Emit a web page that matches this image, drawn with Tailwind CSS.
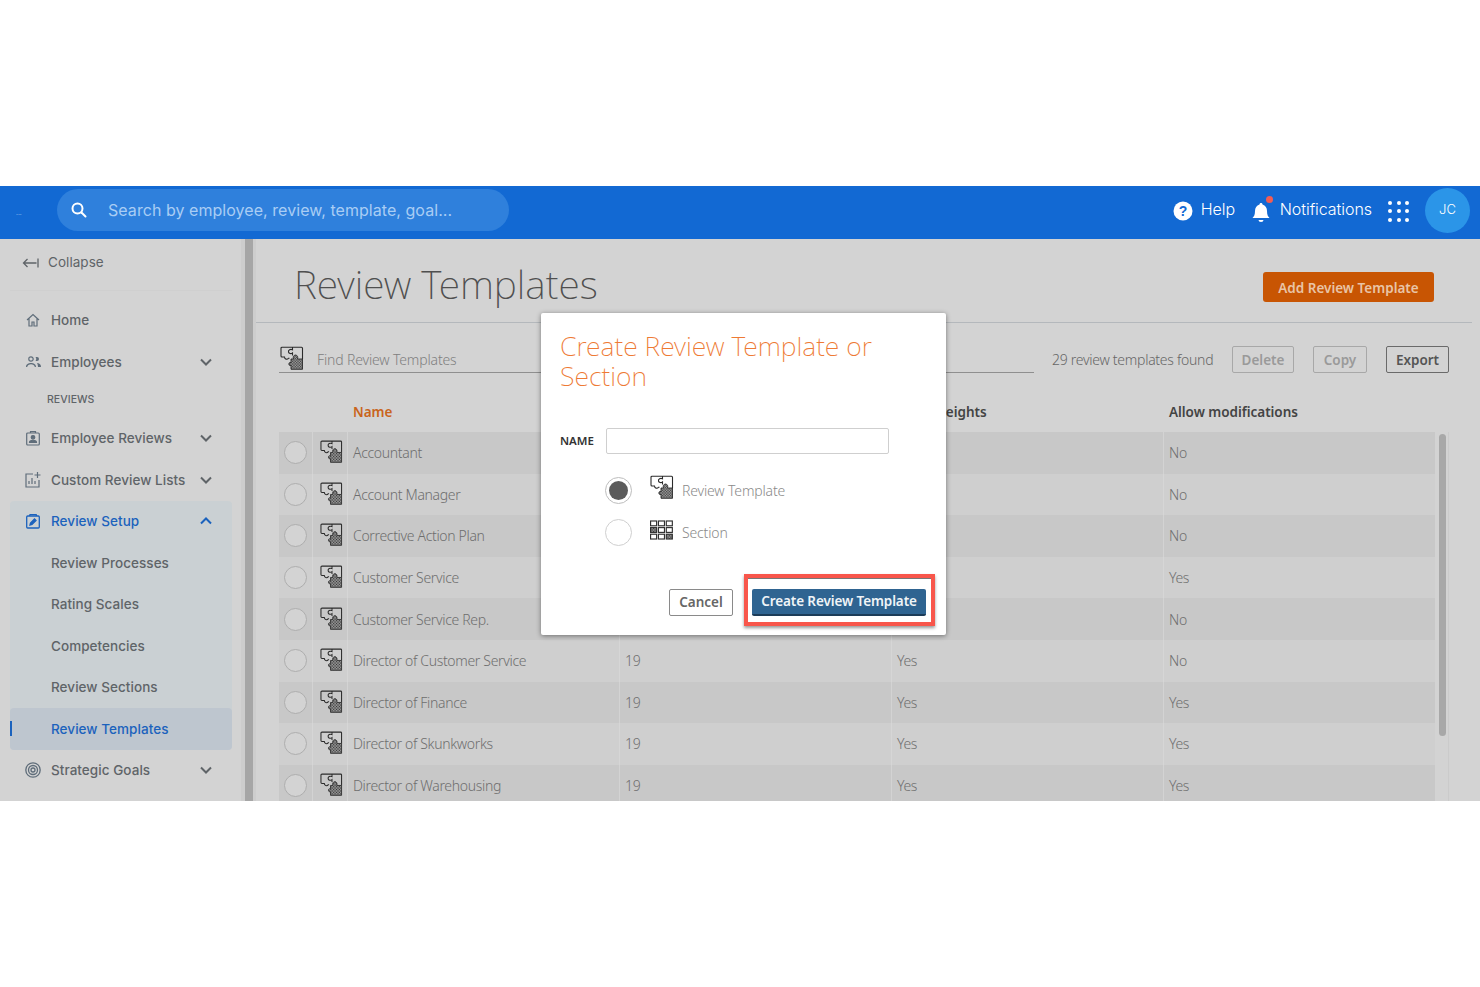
<!DOCTYPE html>
<html>
<head>
<meta charset="utf-8">
<script src="https://cdn.jsdelivr.net/npm/@tailwindcss/browser@4"></script>
</head>
<body class="bg-white font-['Noto_Sans',sans-serif]">
<svg class="absolute w-0 h-0">
<defs>
<pattern id="dots" width="1.6" height="1.6" patternUnits="userSpaceOnUse"><rect width="1.600" height="1.600" fill="#b4b4b4"/><rect width=".8" height=".8" fill="#333"/><rect x=".8" y=".8" width=".8" height=".8" fill="#333"/></pattern>
<symbol id="puzzle" viewBox="0 0 24 24">
<path d="M2 1.200H21.500a1 1 0 0 1 1 1V13M1 2.200V10a1 1 0 0 0 1 1h2.500c0 2.200 2.800 3 4 1.200H9.500M12.500 1.200V3.800c-2-1.200-4.500.2-4 2.200.4 1.600 2.500 2.200 4 1V9.500M1 2.200a1 1 0 0 1 1-1" fill="none" stroke="#2b2b2b" stroke-width="1.100"/>
<path d="M11 23.300V19.500H9.800c-1.200 0-1.200-3 0-3H11V13h2.500c-.8-2 .2-4 2-4s2.800 2 2 4H22.500V23.300z" fill="url(#dots)" stroke="#2b2b2b" stroke-width=".9"/>
</symbol>
<symbol id="grid" viewBox="0 0 24 20">
<g fill="none" stroke="#2f2f2f" stroke-width="1.200"><rect x=".6" y=".6" width="6.300" height="5"/><rect x="8.800" y=".6" width="6.300" height="5"/><rect x="17" y=".6" width="6.300" height="5"/><rect x=".6" y="7.500" width="6.300" height="5" fill="url(#dots)"/><rect x="8.800" y="7.500" width="6.300" height="5"/><rect x="17" y="7.500" width="6.300" height="5"/><rect x=".6" y="14.400" width="6.300" height="5"/><rect x="8.800" y="14.400" width="6.300" height="5"/><rect x="17" y="14.400" width="6.300" height="5" fill="url(#dots)"/></g>
</symbol>
</defs>
</svg>

<div class="h-[186px]"></div>
<div class="relative h-[615px] overflow-hidden flex flex-col">
  <!-- header -->
  <header class="h-[53px] shrink-0 bg-[#1269d3] flex items-center text-white">
    <span class="w-[57px] pl-[16px] text-[7px] text-[#7fb0ea] leading-none">...</span>
    <div class="w-[452px] h-[42px] rounded-full bg-[#2f80dc] flex items-center mt-[-5px]">
      <svg class="w-[18px] h-[18px] ml-[13px]" viewBox="0 0 18 18" fill="none" stroke="#fff" stroke-width="2" stroke-linecap="round"><circle cx="7.500" cy="7.500" r="5"/><path d="M11.500 11.500L15.500 15.500"/></svg>
      <span class="ml-[20px] text-[16px] tracking-[0.05px] text-[#a9cdf4] font-['Inter',sans-serif]">Search by employee, review, template, goal...</span>
    </div>
    <div class="ml-auto flex items-center font-['Inter',sans-serif] font-light mt-[-5px]">
      <svg class="w-[20px] h-[20px] mt-[2px]" viewBox="0 0 20 20"><circle cx="10" cy="10" r="9.500" fill="#fff"/><text x="10" y="15" text-anchor="middle" font-size="14" font-weight="700" fill="#1269d3" font-family="Liberation Sans">?</text></svg>
      <span class="ml-[8px] mt-[-2px] text-[16px] w-[33px] whitespace-nowrap">Help</span>
      <div class="relative ml-[18px] w-[18px] h-[24px]">
        <svg class="w-[18px] h-[22px] mt-[4px]" viewBox="0 0 18 22" fill="#fff"><path d="M9 1c1 0 1.500.7 1.500 1.500C13.500 3.300 15 6 15 9c0 4 1 5.500 2.500 7H.5C2 14.500 3 13 3 9c0-3 1.500-5.700 4.500-6.500C7.500 1.700 8 1 9 1z"/><path d="M6.500 18h5a2.500 2 0 0 1-5 0z"/></svg>
        <span class="absolute top-[-2px] right-[-3px] w-[7px] h-[7px] rounded-full bg-[#f25c54]"></span>
      </div>
      <span class="ml-[10px] mt-[-2px] text-[16px] tracking-[-0.05px]">Notifications</span>
      <div class="ml-[16px] mt-[2px] grid grid-cols-3 gap-[4.500px]">
        <i class="block w-[4px] h-[4px] rounded-full bg-white"></i><i class="block w-[4px] h-[4px] rounded-full bg-white"></i><i class="block w-[4px] h-[4px] rounded-full bg-white"></i><i class="block w-[4px] h-[4px] rounded-full bg-white"></i><i class="block w-[4px] h-[4px] rounded-full bg-white"></i><i class="block w-[4px] h-[4px] rounded-full bg-white"></i><i class="block w-[4px] h-[4px] rounded-full bg-white"></i><i class="block w-[4px] h-[4px] rounded-full bg-white"></i><i class="block w-[4px] h-[4px] rounded-full bg-white"></i>
      </div>
      <div class="ml-[16px] mr-[10px] w-[45px] h-[45px] rounded-full bg-[#2b95e8] flex items-center justify-center text-[13px]">JC</div>
    </div>
  </header>

  <div class="flex flex-1 min-h-0 bg-[#d3d3d3]">
    <!-- sidebar -->
    <aside class="w-[241px] shrink-0 font-['Inter',sans-serif] text-[13.500px] tracking-[0.05px] font-medium text-[#5f6468] overflow-hidden">
      <div class="h-[52px] ml-[10px] mr-[9px] border-b border-[#cfcfcf] flex items-center pl-[12px] pb-[4px] font-normal">
        <svg class="w-[17px] h-[12px]" viewBox="0 0 17 12" fill="none" stroke="#5f6468" stroke-width="1.300"><path d="M14.500 6H1.500M5.500 2L1.500 6l4 4M16 1.500v9"/></svg>
        <span class="ml-[9px]">Collapse</span>
      </div>
      <nav class="pt-[8.500px] pl-[10px] pr-[9px]">
        <div class="h-[41.500px] flex items-center pl-[16px]">
          <svg class="w-[14px] h-[14px] shrink-0" viewBox="0 0 14 14" fill="none" stroke="#5f6d7a" stroke-width="1.200"><path d="M1 7l6-5.500L13 7M3 5.500V13h3V9h2v4h3V5.500"/></svg>
          <span class="ml-[11px]">Home</span>
        </div>
        <div class="h-[41.500px] flex items-center pl-[16px]">
          <svg class="w-[15px] h-[12px] shrink-0" viewBox="0 0 15 12" fill="#5f6d7a"><circle cx="5" cy="3" r="2.200" fill="none" stroke="#5f6d7a" stroke-width="1.200"/><path d="M9.500 1h1.500a2 2 0 0 1 0 4H9.500c1-1 1-3 0-4zM0 11c0-3 2.500-4 5-4s5 1 5 4H8.800c0-1.600-2-2.800-3.800-2.800S1.200 9.400 1.200 11zM11 7c2 0 4 1 4 4h-3c0-1.500-.5-3-1-4z"/></svg>
          <span class="ml-[10px]">Employees</span>
          <svg class="ml-auto mr-[20px] w-[12px] h-[8px]" viewBox="0 0 12 8" fill="none" stroke="#5f6468" stroke-width="2"><path d="M1 1.500l5 5 5-5"/></svg>
        </div>
        <div class="h-[35px] flex items-center pl-[37px] text-[10.500px] text-[#5f6468] font-medium">REVIEWS</div>
        <div class="h-[41.500px] flex items-center pl-[16px]">
          <svg class="w-[14px] h-[15px] shrink-0" viewBox="0 0 14 15" fill="none" stroke="#5f6d7a" stroke-width="1.200"><rect x=".7" y="2" width="12.600" height="12" rx="1"/><path d="M4.500 2V.7h5V2"/><circle cx="7" cy="6.300" r="1.800" fill="#5f6d7a"/><path d="M3.500 11.500c0-3 7-3 7 0z" fill="#5f6d7a"/></svg>
          <span class="ml-[11px]">Employee Reviews</span>
          <svg class="ml-auto mr-[20px] w-[12px] h-[8px]" viewBox="0 0 12 8" fill="none" stroke="#5f6468" stroke-width="2"><path d="M1 1.500l5 5 5-5"/></svg>
        </div>
        <div class="h-[41.500px] flex items-center pl-[15px]">
          <svg class="w-[16px] h-[16px] shrink-0" viewBox="0 0 16 16" fill="none" stroke="#5f6d7a" stroke-width="1.200"><path d="M8 2H1v13h13V8M12.500 0v6M9.500 3h6M4 12V9M7 12V6M10 12V9"/></svg>
          <span class="ml-[10px]">Custom Review Lists</span>
          <svg class="ml-auto mr-[20px] w-[12px] h-[8px]" viewBox="0 0 12 8" fill="none" stroke="#5f6468" stroke-width="2"><path d="M1 1.500l5 5 5-5"/></svg>
        </div>
        <div class="rounded-[4px] bg-[#cad0d3]">
          <div class="h-[41.500px] flex items-center pl-[16px] text-[#1b62bd]">
            <svg class="w-[14px] h-[15px] shrink-0" viewBox="0 0 14 15" fill="none" stroke="#1b62bd" stroke-width="1.300"><rect x=".7" y="2" width="12.600" height="12" rx="1"/><path d="M3.500 2L4 .7h6.200L10.500 2"/><path d="M4 11l.5-2 4-4 1.500 1.500-4 4z" fill="#1b62bd"/></svg>
            <span class="ml-[11px]">Review Setup</span>
            <svg class="ml-auto mr-[20px] w-[12px] h-[8px]" viewBox="0 0 12 8" fill="none" stroke="#1b62bd" stroke-width="2"><path d="M1 6.500l5-5 5 5"/></svg>
          </div>
          <div class="h-[41.500px] flex items-center pl-[41px]">Review Processes</div>
          <div class="h-[41.500px] flex items-center pl-[41px]">Rating Scales</div>
          <div class="h-[41.500px] flex items-center pl-[41px]">Competencies</div>
          <div class="h-[41.500px] flex items-center pl-[41px]">Review Sections</div>
          <div class="relative h-[41.500px] flex items-center pl-[41px] rounded-[4px] bg-[#bec6cf] text-[#1b62bd]">
            <span class="absolute left-0 top-[13px] h-[15px] w-[2px] bg-[#1b62bd]"></span>Review Templates
          </div>
        </div>
        <div class="h-[41.500px] flex items-center pl-[15px]">
          <svg class="w-[16px] h-[16px] shrink-0" viewBox="0 0 16 16" fill="none" stroke="#5f6d7a" stroke-width="1.300"><circle cx="8" cy="8" r="7.200"/><circle cx="8" cy="8" r="4.500"/><circle cx="8" cy="8" r="2"/></svg>
          <span class="ml-[10px]">Strategic Goals</span>
          <svg class="ml-auto mr-[20px] w-[12px] h-[8px]" viewBox="0 0 12 8" fill="none" stroke="#5f6468" stroke-width="2"><path d="M1 1.500l5 5 5-5"/></svg>
        </div>
      </nav>
    </aside>
    <div class="w-[4px] bg-[#cdcdcd]"></div>
    <div class="w-[8px] bg-[#a6a6a6]"></div>
    <div class="w-[3px] bg-[#cdcdcd]"></div>

    <!-- main -->
    <main class="flex-1 min-w-0 text-[#6e6e6e]">
      <div class="h-[84px] mr-[8px] border-b border-[#b4b8bc] flex items-center justify-between pl-[38px] pr-[38px]">
        <h1 class="text-[39px] font-extralight text-[#4f4f4f] leading-none mt-[6px]">Review Templates</h1>
        <button class="w-[171px] h-[30px] pt-[3px] rounded-[3px] bg-[#c85503] text-[#e9c4a6] text-[13.500px] font-semibold mt-[12px]">Add Review Template</button>
      </div>
      <div class="h-[74px] pl-[23px] pr-[31px] flex items-center">
        <div class="w-[755px] shrink-0 h-[30px] border-b border-[#8f8f8f] flex items-center self-end mb-[24px]">
          <svg class="w-[24px] h-[24px] ml-[1px]"><use href="#puzzle"/></svg>
          <span class="ml-[13px] mt-[3px] text-[14px] tracking-[-0.15px] font-light text-[#808080]">Find Review Templates</span>
        </div>
        <span class="ml-[18px] mt-[-2px] text-[14px] tracking-[-0.27px] font-light text-[#666] whitespace-nowrap">29 review templates found</span>
        <div class="ml-auto flex items-center mt-[-1px]">
          <button class="w-[62px] h-[27px] pt-[1px] rounded-[2px] border border-[#a8a8a8] text-[13.500px] font-semibold text-[#9a9a9a]">Delete</button>
          <button class="ml-[19px] w-[54px] h-[27px] pt-[1px] rounded-[2px] border border-[#a8a8a8] text-[13.500px] font-semibold text-[#9a9a9a]">Copy</button>
          <button class="ml-[19px] w-[63px] h-[27px] pt-[1px] rounded-[2px] border border-[#6a6a6a] text-[13.500px] font-semibold text-[#555]">Export</button>
        </div>
      </div>
      <div class="flex pl-[23px] pr-[45px]">
        <div class="flex-1 min-w-0 text-[14px] tracking-[-0.33px] font-light">
          <div class="h-[35px] pb-[4px] flex items-center text-[13.500px] tracking-[-0.03px] font-semibold text-[#444]">
            <span class="w-[69px]"></span>
            <span class="w-[272px] pl-[5px] text-[#c9641c]">Name</span>
            <span class="w-[272px]"></span>
            <span class="w-[272px] pl-[8px]">Uses weights</span>
            <span class="pl-[5px]">Allow modifications</span>
          </div>
          <div class="h-[41.600px] flex bg-[#c8c8c8]"><div class="w-[34px] flex items-center justify-center border-r border-[#d3d3d3]"><i class="block w-[23px] h-[23px] rounded-full border border-[#aeaeae] bg-[#d3d3d3]"></i></div><div class="w-[35px] pl-[2px] flex items-center justify-center border-r border-[#d3d3d3]"><svg class="w-[23px] h-[23px] mt-[-2px]"><use href="#puzzle"/></svg></div><div class="w-[272px] flex items-center pl-[5px] border-r border-[#d3d3d3]">Accountant</div><div class="w-[272px] flex items-center pl-[5px] border-r border-[#d3d3d3]">19</div><div class="w-[272px] flex items-center pl-[5px] border-r border-[#d3d3d3]">Yes</div><div class="flex-1 flex items-center pl-[5px]">No</div></div>
          <div class="h-[41.600px] flex bg-[#cfcfcf]"><div class="w-[34px] flex items-center justify-center border-r border-[#d6d6d6]"><i class="block w-[23px] h-[23px] rounded-full border border-[#aeaeae] bg-[#d3d3d3]"></i></div><div class="w-[35px] pl-[2px] flex items-center justify-center border-r border-[#d6d6d6]"><svg class="w-[23px] h-[23px] mt-[-2px]"><use href="#puzzle"/></svg></div><div class="w-[272px] flex items-center pl-[5px] border-r border-[#d6d6d6]">Account Manager</div><div class="w-[272px] flex items-center pl-[5px] border-r border-[#d6d6d6]">19</div><div class="w-[272px] flex items-center pl-[5px] border-r border-[#d6d6d6]">Yes</div><div class="flex-1 flex items-center pl-[5px]">No</div></div>
          <div class="h-[41.600px] flex bg-[#c8c8c8]"><div class="w-[34px] flex items-center justify-center border-r border-[#d3d3d3]"><i class="block w-[23px] h-[23px] rounded-full border border-[#aeaeae] bg-[#d3d3d3]"></i></div><div class="w-[35px] pl-[2px] flex items-center justify-center border-r border-[#d3d3d3]"><svg class="w-[23px] h-[23px] mt-[-2px]"><use href="#puzzle"/></svg></div><div class="w-[272px] flex items-center pl-[5px] border-r border-[#d3d3d3]">Corrective Action Plan</div><div class="w-[272px] flex items-center pl-[5px] border-r border-[#d3d3d3]">19</div><div class="w-[272px] flex items-center pl-[5px] border-r border-[#d3d3d3]">Yes</div><div class="flex-1 flex items-center pl-[5px]">No</div></div>
          <div class="h-[41.600px] flex bg-[#cfcfcf]"><div class="w-[34px] flex items-center justify-center border-r border-[#d6d6d6]"><i class="block w-[23px] h-[23px] rounded-full border border-[#aeaeae] bg-[#d3d3d3]"></i></div><div class="w-[35px] pl-[2px] flex items-center justify-center border-r border-[#d6d6d6]"><svg class="w-[23px] h-[23px] mt-[-2px]"><use href="#puzzle"/></svg></div><div class="w-[272px] flex items-center pl-[5px] border-r border-[#d6d6d6]">Customer Service</div><div class="w-[272px] flex items-center pl-[5px] border-r border-[#d6d6d6]">19</div><div class="w-[272px] flex items-center pl-[5px] border-r border-[#d6d6d6]">Yes</div><div class="flex-1 flex items-center pl-[5px]">Yes</div></div>
          <div class="h-[41.600px] flex bg-[#c8c8c8]"><div class="w-[34px] flex items-center justify-center border-r border-[#d3d3d3]"><i class="block w-[23px] h-[23px] rounded-full border border-[#aeaeae] bg-[#d3d3d3]"></i></div><div class="w-[35px] pl-[2px] flex items-center justify-center border-r border-[#d3d3d3]"><svg class="w-[23px] h-[23px] mt-[-2px]"><use href="#puzzle"/></svg></div><div class="w-[272px] flex items-center pl-[5px] border-r border-[#d3d3d3]">Customer Service Rep.</div><div class="w-[272px] flex items-center pl-[5px] border-r border-[#d3d3d3]">19</div><div class="w-[272px] flex items-center pl-[5px] border-r border-[#d3d3d3]">Yes</div><div class="flex-1 flex items-center pl-[5px]">No</div></div>
          <div class="h-[41.600px] flex bg-[#cfcfcf]"><div class="w-[34px] flex items-center justify-center border-r border-[#d6d6d6]"><i class="block w-[23px] h-[23px] rounded-full border border-[#aeaeae] bg-[#d3d3d3]"></i></div><div class="w-[35px] pl-[2px] flex items-center justify-center border-r border-[#d6d6d6]"><svg class="w-[23px] h-[23px] mt-[-2px]"><use href="#puzzle"/></svg></div><div class="w-[272px] flex items-center pl-[5px] border-r border-[#d6d6d6]">Director of Customer Service</div><div class="w-[272px] flex items-center pl-[5px] border-r border-[#d6d6d6]">19</div><div class="w-[272px] flex items-center pl-[5px] border-r border-[#d6d6d6]">Yes</div><div class="flex-1 flex items-center pl-[5px]">No</div></div>
          <div class="h-[41.600px] flex bg-[#c8c8c8]"><div class="w-[34px] flex items-center justify-center border-r border-[#d3d3d3]"><i class="block w-[23px] h-[23px] rounded-full border border-[#aeaeae] bg-[#d3d3d3]"></i></div><div class="w-[35px] pl-[2px] flex items-center justify-center border-r border-[#d3d3d3]"><svg class="w-[23px] h-[23px] mt-[-2px]"><use href="#puzzle"/></svg></div><div class="w-[272px] flex items-center pl-[5px] border-r border-[#d3d3d3]">Director of Finance</div><div class="w-[272px] flex items-center pl-[5px] border-r border-[#d3d3d3]">19</div><div class="w-[272px] flex items-center pl-[5px] border-r border-[#d3d3d3]">Yes</div><div class="flex-1 flex items-center pl-[5px]">Yes</div></div>
          <div class="h-[41.600px] flex bg-[#cfcfcf]"><div class="w-[34px] flex items-center justify-center border-r border-[#d6d6d6]"><i class="block w-[23px] h-[23px] rounded-full border border-[#aeaeae] bg-[#d3d3d3]"></i></div><div class="w-[35px] pl-[2px] flex items-center justify-center border-r border-[#d6d6d6]"><svg class="w-[23px] h-[23px] mt-[-2px]"><use href="#puzzle"/></svg></div><div class="w-[272px] flex items-center pl-[5px] border-r border-[#d6d6d6]">Director of Skunkworks</div><div class="w-[272px] flex items-center pl-[5px] border-r border-[#d6d6d6]">19</div><div class="w-[272px] flex items-center pl-[5px] border-r border-[#d6d6d6]">Yes</div><div class="flex-1 flex items-center pl-[5px]">Yes</div></div>
          <div class="h-[41.600px] flex bg-[#c8c8c8]"><div class="w-[34px] flex items-center justify-center border-r border-[#d3d3d3]"><i class="block w-[23px] h-[23px] rounded-full border border-[#aeaeae] bg-[#d3d3d3]"></i></div><div class="w-[35px] pl-[2px] flex items-center justify-center border-r border-[#d3d3d3]"><svg class="w-[23px] h-[23px] mt-[-2px]"><use href="#puzzle"/></svg></div><div class="w-[272px] flex items-center pl-[5px] border-r border-[#d3d3d3]">Director of Warehousing</div><div class="w-[272px] flex items-center pl-[5px] border-r border-[#d3d3d3]">19</div><div class="w-[272px] flex items-center pl-[5px] border-r border-[#d3d3d3]">Yes</div><div class="flex-1 flex items-center pl-[5px]">Yes</div></div>
        </div>
      </div>
    </main>
  </div>

  <!-- scrollbar over the table -->
  <span class="absolute left-[1448px] top-[246px] bottom-0 w-[1px] bg-[#cbcbcb]"></span>
  <span class="absolute left-[1439px] top-[248px] w-[7px] h-[302px] rounded-full bg-[#a8a8a8]"></span>

  <!-- modal -->
  <div class="absolute left-[541px] top-[127px] w-[405px] h-[322px] bg-white rounded-[2px] shadow-[0_1px_5px_rgba(0,0,0,0.45)] px-[19px] pt-[19px]">
    <h2 class="text-[26.600px] leading-[29.500px] font-extralight text-[#ee7a34]">Create Review Template or Section</h2>
    <div class="mt-[37px] flex items-center">
      <label class="w-[46px] text-[11.500px] font-semibold text-[#333]">NAME</label>
      <div class="w-[283px] h-[26px] rounded-[2px] border border-[#cfcfcf]"></div>
    </div>
    <div class="mt-[15px] ml-[45px] h-[42px] flex items-center">
      <span class="w-[27px] h-[27px] rounded-full border border-[#bdbdbd] flex items-center justify-center"><i class="block w-[19px] h-[19px] rounded-full bg-[#5c5c5c]"></i></span>
      <svg class="ml-[18px] w-[24px] h-[24px] mt-[-6px]"><use href="#puzzle"/></svg>
      <span class="ml-[8px] text-[14px] tracking-[-0.15px] font-light text-[#8a8a8a]">Review Template</span>
    </div>
    <div class="ml-[45px] h-[43px] flex items-center">
      <span class="w-[27px] h-[27px] rounded-full border border-[#cfcfcf]"></span>
      <svg class="ml-[18px] w-[23px] h-[20px] mt-[-5px]"><use href="#grid"/></svg>
      <span class="ml-[9px] text-[14px] tracking-[-0.15px] font-light text-[#8a8a8a]">Section</span>
    </div>
    <div class="absolute right-[11px] bottom-[9px] flex items-center">
      <button class="w-[64px] h-[27px] pt-[1px] rounded-[2px] border border-[#8a8a8a] text-[13.500px] font-semibold text-[#666] mr-[11px] mt-[4px]">Cancel</button>
      <div class="w-[191px] h-[52px] border-[4px] border-[#f8564b] shadow-[0_2px_3px_rgba(0,0,0,0.4),inset_0_1px_0_#777] flex items-center justify-center pt-[4px]">
        <button class="w-[174px] h-[27px] pt-[1px] ml-[-1px] rounded-[2px] bg-[#2f6491] border-b-2 border-[#1c3c58] text-[#f0f4f7] text-[13.500px] tracking-[-0.1px] font-semibold">Create Review Template</button>
      </div>
    </div>
  </div>
</div>
<div class="h-[186px]"></div>
</body>
</html>
